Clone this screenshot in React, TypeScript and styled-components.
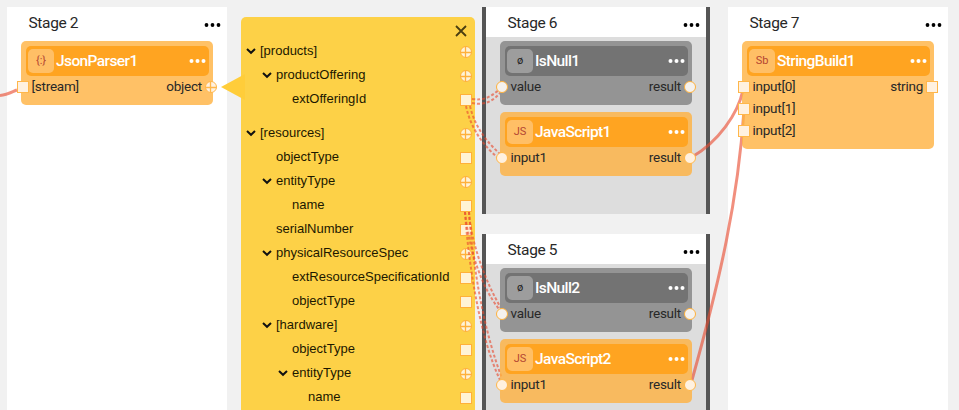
import React from "react";
import styled, { createGlobalStyle, css } from "styled-components";

type Tone = "orange" | "gray";
type PortShape = "square" | "circle" | "cross";

const Global = createGlobalStyle`
  * { box-sizing: border-box; }
  body { margin: 0; background: #f1f1f1; font-family: Roboto, "Liberation Sans", sans-serif; color: #282828; }
`;

const Canvas = styled.main`
  position: relative;
  display: flex;
  align-items: flex-start;
  width: 959px;
  height: 410px;
  padding: 7px 0 0 7px;
  overflow: hidden;
`;

const StageColumn = styled.div<{ $before?: number }>`
  display: flex;
  flex-direction: column;
  gap: 20px;
  flex: none;
  height: 403px;
  margin-left: ${(p) => p.$before ?? 0}px;
`;

const StageBox = styled.section<{ $framed?: boolean; $height: number }>`
  flex: none;
  width: ${(p) => (p.$framed ? 228 : 220)}px;
  height: ${(p) => p.$height}px;
  background: #fff;
  ${(p) =>
    p.$framed &&
    css`
      background: #ddd;
      border: solid #555;
      border-width: 0 4px;
    `}
`;

const StageHeader = styled.header`
  display: flex;
  align-items: center;
  justify-content: space-between;
  height: 30px;
  padding: 2px 6.5px 0 21.5px;
  background: #fff;
  font-size: 15.5px;
  letter-spacing: -0.35px;
  line-height: 30px;
`;

const HeaderMenu = styled.span`
  margin-top: 3px;
`;

const NodeList = styled.div`
  display: flex;
  flex-direction: column;
  gap: 7px;
  padding: 4px 14px;
`;

const bodyColor = { orange: "rgba(255, 178, 64, 0.8)", gray: "#949494" };
const headColor = { orange: "#ffa421", gray: "#737373" };
const portLine = { orange: "#ffb74a", gray: "#ffb13b" };
const portFill = { orange: "#fff1e0", gray: "#f4f1ee" };

const NodeCard = styled.article<{ $tone: Tone }>`
  position: relative;
  z-index: 1;
  padding: 5px 0 7px;
  border-radius: 5px;
  background: ${(p) => bodyColor[p.$tone]};
`;

const NodeHeader = styled.div<{ $tone: Tone }>`
  display: flex;
  align-items: center;
  height: 30px;
  margin: 0 4px 0 5px;
  padding: 0 3px 1px 2px;
  border-radius: 5px;
  background: ${(p) => headColor[p.$tone]};
`;

const NodeIcon = styled.span<{ $tone: Tone }>`
  display: flex;
  align-items: center;
  justify-content: center;
  width: 26px;
  height: 24px;
  border-radius: 5px;
  background: ${(p) => (p.$tone === "gray" ? "#9d9d9d" : "#ffbf66")};
  color: ${(p) => (p.$tone === "gray" ? "#222" : "#b44632")};
  font-size: 11px;
`;

const NodeTitle = styled.span`
  flex: 1;
  margin-left: 2px;
  color: #fff;
  font-size: 15.5px;
  font-weight: 500;
  letter-spacing: -0.6px;
`;

const PortRow = styled.div`
  display: flex;
  align-items: center;
  justify-content: space-between;
  height: 22px;
  margin: 0 -4px;
`;

const PortLabel = styled.span<{ $right?: boolean }>`
  display: flex;
  flex-direction: ${(p) => (p.$right ? "row-reverse" : "row")};
  align-items: center;
  gap: ${(p) => (p.$right ? 3 : 2.5)}px;
  font-size: 13.5px;
  letter-spacing: -0.25px;
  line-height: 20px;
`;

const PortName = styled.span`
  margin-top: -2px;
`;

const Icon = styled.svg`
  display: block;
  flex: none;
`;

const TreePanel = styled.aside`
  position: relative;
  flex: none;
  width: 234px;
  height: 393px;
  margin: 10px 0 0 14px;
  border-radius: 5px 5px 0 0;
  background: #fdd147;
`;

const Pointer = styled(Icon)`
  position: absolute;
  left: -20px;
  top: 57px;
`;

const PanelBar = styled.div`
  display: flex;
  justify-content: flex-end;
  height: 22px;
  padding: 8px 8px 0 0;
`;

const TreeRow = styled.div<{ $depth: number; $spaced?: boolean }>`
  display: flex;
  align-items: center;
  height: 24px;
  margin-top: ${(p) => (p.$spaced ? 10 : 0)}px;
  padding: 0 3px 0 ${(p) => 4 + p.$depth * 16}px;
  color: #1c1800;
  font-family: "Liberation Sans", Arial, sans-serif;
  font-size: 13px;
`;

const Toggle = styled.span`
  width: 15px;
  flex: none;
`;

const TreeLabel = styled.span`
  flex: 1;
  margin-top: -1px;
  white-space: nowrap;
`;

const TreePort = styled.span`
  margin-top: 2px;
`;

const Wires = styled.svg`
  position: absolute;
  inset: 0;
  pointer-events: none;
`;

function Dots({ light }: { light?: boolean }) {
  const r = light ? 2 : 1.9;
  return (
    <Icon width="17" height="6" viewBox="0 0 17 6" fill={light ? "#fff" : "#000"}>
      <circle cx="2.5" cy="3" r={r} />
      <circle cx="8.5" cy="3" r={r} />
      <circle cx="14.5" cy="3" r={r} />
    </Icon>
  );
}

function Port({ shape, line, fill }: { shape: PortShape; line: string; fill: string }) {
  return (
    <Icon width="12" height="12" viewBox="0 0 12 12" fill={fill} stroke={line} overflow="visible">
      {shape === "square" ? <rect x="0.5" y="0.5" width="11" height="11" /> : <circle cx="6" cy="6" r="5.500" />}
      {shape === "cross" && <path d="M5.500 0.500v11M0.500 6.500h11" strokeWidth="1.3" />}
    </Icon>
  );
}

interface NodeProps {
  tone: Tone;
  icon: string;
  title: string;
  inputs: string[];
  output: string;
  inShape: PortShape;
  outShape: PortShape;
}

function GraphNode({ tone, icon, title, inputs, output, inShape, outShape }: NodeProps) {
  const colors = { line: portLine[tone], fill: portFill[tone] };
  return (
    <NodeCard $tone={tone}>
      <NodeHeader $tone={tone}>
        <NodeIcon $tone={tone}>{icon}</NodeIcon>
        <NodeTitle>{title}</NodeTitle>
        <Dots light />
      </NodeHeader>
      {inputs.map((name, i) => (
        <PortRow key={name}>
          <PortLabel><Port shape={inShape} {...colors} /><PortName>{name}</PortName></PortLabel>
          {i === 0 && <PortLabel $right><Port shape={outShape} {...colors} /><PortName>{output}</PortName></PortLabel>}
        </PortRow>
      ))}
    </NodeCard>
  );
}

function Stage({ title, framed, height, children }: { title: string; framed?: boolean; height: number; children: React.ReactNode }) {
  return (
    <StageBox $framed={framed} $height={height}>
      <StageHeader>
        <span>{title}</span>
        <HeaderMenu><Dots /></HeaderMenu>
      </StageHeader>
      <NodeList>{children}</NodeList>
    </StageBox>
  );
}

const tree: { label: string; depth: number; open?: boolean; spaced?: boolean }[] = [
  { label: "[products]", depth: 0, open: true },
  { label: "productOffering", depth: 1, open: true },
  { label: "extOfferingId", depth: 2 },
  { label: "[resources]", depth: 0, open: true, spaced: true },
  { label: "objectType", depth: 1 },
  { label: "entityType", depth: 1, open: true },
  { label: "name", depth: 2 },
  { label: "serialNumber", depth: 1 },
  { label: "physicalResourceSpec", depth: 1, open: true },
  { label: "extResourceSpecificationId", depth: 2 },
  { label: "objectType", depth: 2 },
  { label: "[hardware]", depth: 1, open: true },
  { label: "objectType", depth: 2 },
  { label: "entityType", depth: 2, open: true },
  { label: "name", depth: 3 },
];

const dashed = [
  "M472 99C485 101 491 96 499 90",
  "M472 103C486 106 494 100 501 92",
  "M466 106C471 130 485 147 498 158",
  "M470 106C475 128 488 143 500 154",
  "M465 212C469 250 482 288 499 309",
  "M469 212C471 243 486 283 501 308",
  "M465 212C469 270 481 340 500 380",
  "M469 212C473 270 485 335 502 378",
];

const solid = [
  "M0 95.500C7 95 12 92 17 90",
  "M692 157C718 142 738 114 743 90",
  "M692 380C720 280 738 200 744 110",
];

export default function App() {
  const js = { tone: "orange" as Tone, icon: "JS", inputs: ["input1"], output: "result", inShape: "circle" as PortShape, outShape: "circle" as PortShape };
  const isNull = { ...js, tone: "gray" as Tone, icon: "ø", inputs: ["value"] };
  return (
    <>
      <Global />
      <Canvas>
        <StageColumn>
          <Stage title="Stage 2" height={403}>
            <GraphNode tone="orange" icon="{:}" title="JsonParser1" inputs={["[stream]"]} output="object" inShape="square" outShape="cross" />
          </Stage>
        </StageColumn>
        <TreePanel>
          <Pointer width="24" height="26" viewBox="0 0 24 26">
            <path d="M0 13L24 0V26Z" fill="#ffcd3a" />
          </Pointer>
          <PanelBar>
            <Icon width="12" height="12" viewBox="0 0 12 12" stroke="#4a3e10" strokeWidth="1.8">
              <path d="M1 1l10 10M11 1L1 11" />
            </Icon>
          </PanelBar>
          {tree.map((row, i) => (
            <TreeRow key={i} $depth={row.depth} $spaced={row.spaced}>
              <Toggle>
                {row.open && (
                  <Icon width="12" height="8" viewBox="0 0 12 8" fill="none" stroke="#111" strokeWidth="2">
                    <path d="M2 2l4 3.800L10 2" />
                  </Icon>
                )}
              </Toggle>
              <TreeLabel>{row.label}</TreeLabel>
              <TreePort><Port shape={row.open ? "cross" : "square"} line="#ffb03a" fill="#fff3d6" /></TreePort>
            </TreeRow>
          ))}
        </TreePanel>
        <StageColumn $before={7}>
          <Stage title="Stage 6" framed height={207}>
            <GraphNode {...isNull} title="IsNull1" />
            <GraphNode {...js} title="JavaScript1" />
          </Stage>
          <Stage title="Stage 5" framed height={176}>
            <GraphNode {...isNull} title="IsNull2" />
            <GraphNode {...js} title="JavaScript2" />
          </Stage>
        </StageColumn>
        <StageColumn $before={18}>
          <Stage title="Stage 7" height={403}>
            <GraphNode tone="orange" icon="Sb" title="StringBuild1" inputs={["input[0]", "input[1]", "input[2]"]} output="string" inShape="square" outShape="square" />
          </Stage>
        </StageColumn>
        <Wires width="959" height="410" fill="none" stroke="#e94b2e" strokeOpacity="0.62">
          {solid.map((d) => <path key={d} d={d} strokeWidth="3" />)}
          {dashed.map((d) => <path key={d} d={d} strokeWidth="2" strokeDasharray="3 2" />)}
        </Wires>
      </Canvas>
    </>
  );
}
